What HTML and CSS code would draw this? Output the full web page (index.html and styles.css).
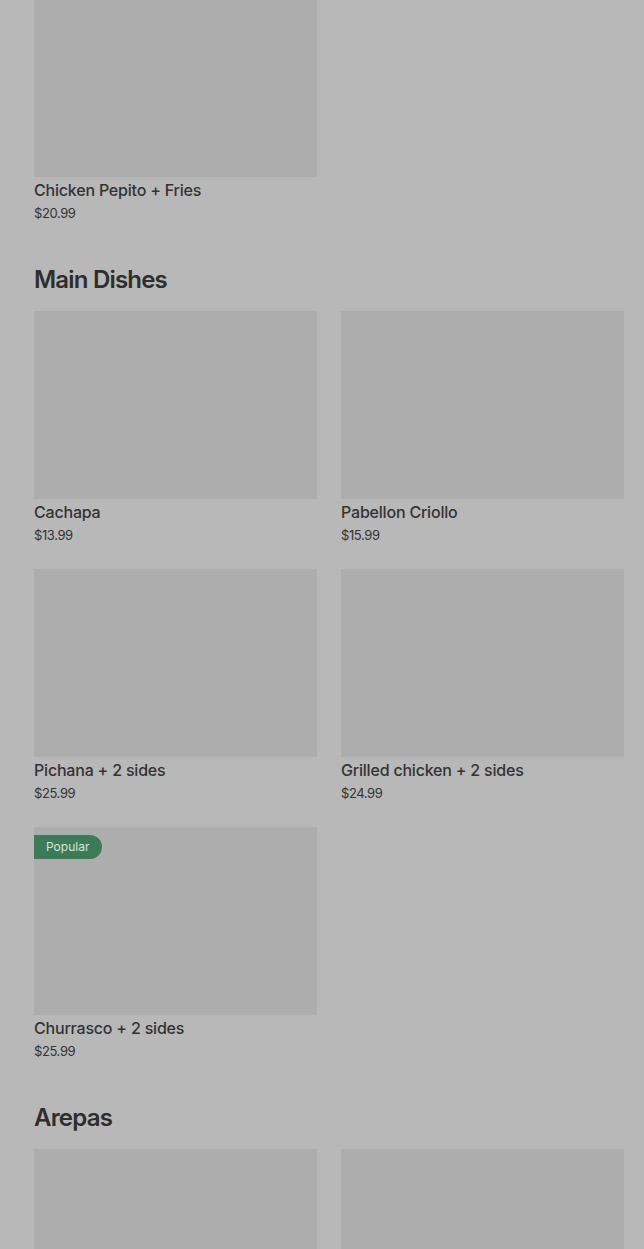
FILE: index.html
```html
<!DOCTYPE html>
<html>
<head>
<meta charset="utf-8">
<link rel="stylesheet" href="styles.css">
</head>
<body>
<div class="page">
  <section class="section first">
    <div class="grid">
      <div class="card">
        <div class="thumb"></div>
        <div class="name">Chicken Pepito + Fries</div>
        <div class="price">$20.99</div>
      </div>
    </div>
  </section>

  <section class="section">
    <h2 class="heading">Main Dishes</h2>
    <div class="grid">
      <div class="card">
        <div class="thumb"></div>
        <div class="name">Cachapa</div>
        <div class="price">$13.99</div>
      </div>
      <div class="card">
        <div class="thumb"></div>
        <div class="name">Pabellon Criollo</div>
        <div class="price">$15.99</div>
      </div>
      <div class="card">
        <div class="thumb"></div>
        <div class="name">Pichana + 2 sides</div>
        <div class="price">$25.99</div>
      </div>
      <div class="card">
        <div class="thumb"></div>
        <div class="name">Grilled chicken + 2 sides</div>
        <div class="price">$24.99</div>
      </div>
      <div class="card">
        <div class="thumb"><span class="badge">Popular</span></div>
        <div class="name">Churrasco + 2 sides</div>
        <div class="price">$25.99</div>
      </div>
    </div>
  </section>

  <section class="section">
    <h2 class="heading">Arepas</h2>
    <div class="grid">
      <div class="card">
        <div class="thumb"></div>
      </div>
      <div class="card">
        <div class="thumb"></div>
      </div>
    </div>
  </section>
</div>
</body>
</html>
```
FILE: styles.css
```css
html, body {
  margin: 0;
  padding: 0;
  background: #b8b8b8;
  overflow: hidden;
}
body {
  font-family: Inter, "Noto Sans", sans-serif;
  color: #2f2f2f;
}
.page {
  padding: 0 20px 0 34px;
}
.section {
  padding-bottom: 38px;
}
.section.first {
  margin-top: -11px;
}
.heading {
  margin: 0 0 15px;
  padding-top: 2px;
  font-size: 24px;
  line-height: 32px;
  font-weight: 600;
  letter-spacing: -0.8px;
  color: #2e2e2e;
}
.grid {
  display: grid;
  grid-template-columns: 283px 283px;
  column-gap: 24px;
  row-gap: 23px;
}
.card {
  display: flex;
  flex-direction: column;
}
.thumb {
  position: relative;
  height: 188px;
  background: #adadad;
}
.name {
  margin-top: 1px;
  font-size: 16px;
  line-height: 24px;
  font-weight: 500;
  letter-spacing: -0.2px;
  color: #333333;
}
.price {
  font-size: 13px;
  line-height: 22px;
  color: #333333;
  letter-spacing: -0.4px;
}
.badge {
  position: absolute;
  top: 8px;
  left: 0;
  height: 24px;
  line-height: 24px;
  padding: 0 13px 0 12px;
  background: #3d7b58;
  color: #d7e6dc;
  font-size: 12px;
  border-radius: 0 12px 12px 0;
}
```
